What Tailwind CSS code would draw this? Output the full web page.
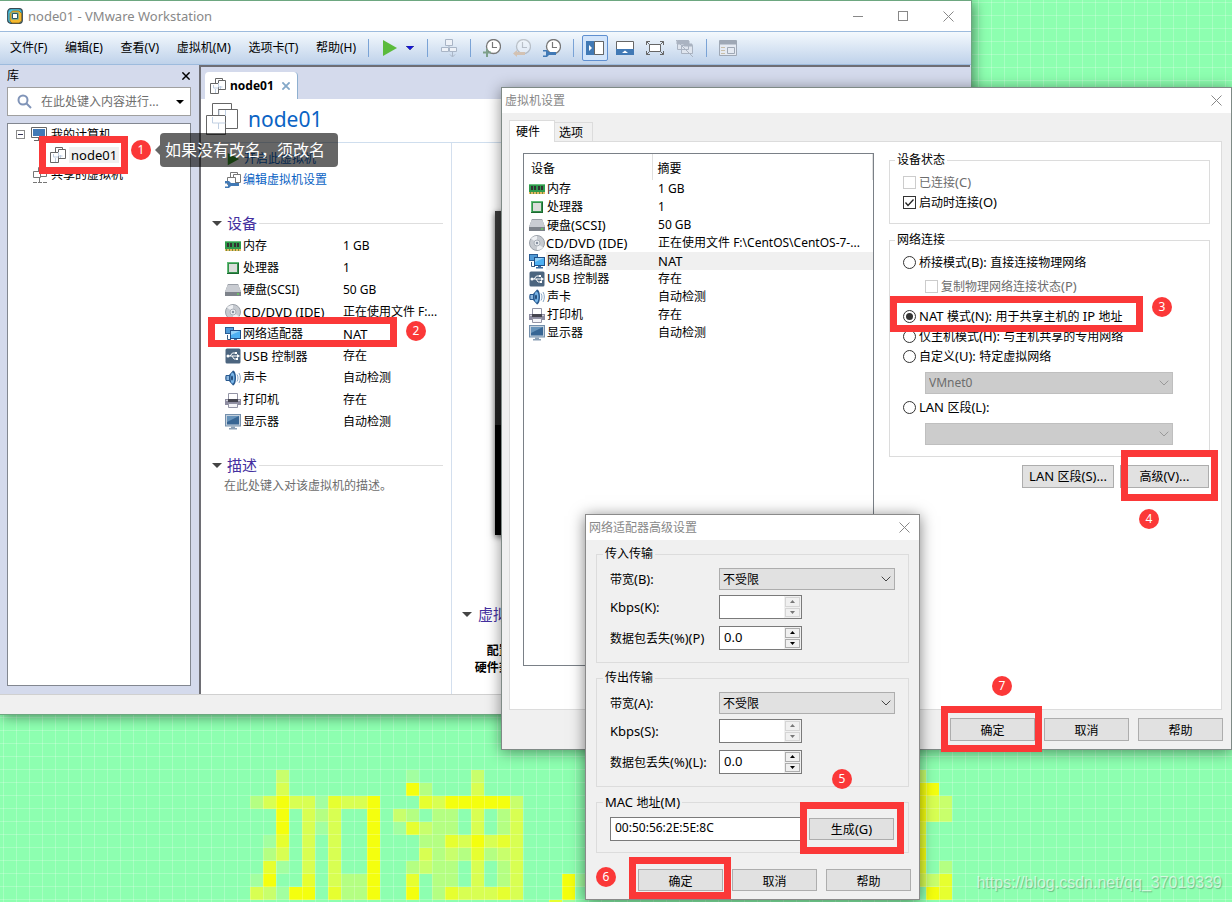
<!DOCTYPE html>
<html lang="zh-CN">
<head>
<meta charset="utf-8">
<meta name="viewport" content="width=device-width, initial-scale=1">
<title>node01 - VMware Workstation</title>
<script src="https://cdn.jsdelivr.net/npm/@tailwindcss/browser@4"></script>
</head>
<body class="font-['Noto_Sans','Noto_Sans_CJK_SC',sans-serif] text-[12px] leading-4 text-black">

<!-- Icon library -->
<svg class="hidden" aria-hidden="true">
  <symbol id="vm" viewBox="0 0 16 16"><g fill="#fff" stroke="#666"><path d="M5.500 .5h7v8h-7z"/><path d="M8.500 2.500h7v9h-7z"/><path d="M.5 5.500h8v10h-8z"/></g><path d="M3.500 7v3h5M5.500 15v-4M8.500 5v4h4M10.500 8v3" fill="none" stroke="#c0cfe2"/></symbol>
  <symbol id="vmbig" viewBox="0 0 32 32"><g fill="#fff" stroke="#666"><path d="M6.500 .5h19v19h-19z"/><path d="M12.500 6.500h19v19h-19z"/><path d="M.5 12.500h19v19h-19z"/></g><path d="M6.500 14v6h6v6M12.500 20h7M13 12v-5M19.500 7v6" fill="none" stroke="#c0cfe2"/></symbol>
  <symbol id="monitor-b" viewBox="0 0 16 15"><path d="M.5.5h15v10H.5z" fill="#fff" stroke="#666"/><path d="M2 2h12v7H2z" fill="#4179b5"/><path d="M7 11h2v2h4v1H3v-1h4z" fill="#666"/></symbol>
  <symbol id="shared" viewBox="0 0 15 16"><g fill="#fff" stroke="#777"><path d="M5.500 .5h6v7h-6z"/><path d="M7.500 2.500h6v7h-6z"/><path d="M.5 4.500h7v6h-7z"/></g><path d="M6.500 11v4M0 15.500h4M5 15.500h4M10 15.500h4" stroke="#777"/></symbol>
  <symbol id="edit" viewBox="0 0 16 16"><g fill="#fff" stroke="#777"><path d="M5.500 .5h7v6h-7z"/><path d="M8.500 2.500h7v8h-7z"/><path d="M2.500 5.500h8v7h-8z"/></g><path d="M0 9h4l2 2h8v3H6l-2 2H0v-1.500h3v-3H0z" fill="#4179b5"/></symbol>
  <symbol id="mem" viewBox="0 0 16 10"><path d="M0 0h16v8H0z" fill="#2f9a4c"/><path d="M0 0h16v1H0z" fill="#6cc27f"/><path d="M2 2h2v4H2zM5 2h2v4H5zM9 2h2v4H9zM12 2h2v4h-2z" fill="#333"/><path d="M0 8h16v2H0z" fill="#e3b862"/><path d="M1.500 8v2M4.500 8v2M7.500 8v2M10.500 8v2M13.500 8v2" stroke="#6b8f3c"/></symbol>
  <symbol id="cpu" viewBox="0 0 14 14"><path d="M1 1h12v12H1z" fill="#35924c"/><path d="M1 1h12v1H2v11H1z" fill="#62bd77"/><path d="M3 3h8v8H3z" fill="#dcdedb"/><path d="M12 2h1v11H1v-1h11z" fill="#1c6931"/></symbol>
  <symbol id="disk" viewBox="0 0 16 12"><path d="M3 0h10l3 8v4H0V8z" fill="#7d828a"/><path d="M3 0h10l3 8H0z" fill="#c9ccd2"/><path d="M3 0h10v1H3z" fill="#9ba0a8"/><circle cx="13" cy="10" r="1" fill="#69d05d"/></symbol>
  <symbol id="cd" viewBox="0 0 16 16"><circle cx="8" cy="8" r="7.500" fill="#c6cad0" stroke="#9aa0a8"/><path d="M8 8 2 3.500A7 7 0 0 1 8 1zM8 8l6 4.500A7 7 0 0 1 8 15z" fill="#eef0f3"/><circle cx="8" cy="8" r="3" fill="#e9ecf0" stroke="#aab0b8"/><circle cx="8" cy="8" r="1.200" fill="#8790a0"/></symbol>
  <symbol id="net" viewBox="0 0 16 15"><path d="M0 0h9v7H0z" fill="#2a5d94"/><path d="M1 1h7v5H1z" fill="#4f9ad6"/><path d="M2.500 8v4.500H6" stroke="#3a5d83" fill="none"/><path d="M5 3h11v9H5z" fill="#1f4f87"/><path d="M6 4h9v7H6z" fill="#4db0f2"/><path d="M6 4h9L6 8z" fill="#94d2f8"/><path d="M9 12h3v1h2v1.500H7V13h2z" fill="#3a6ca0"/></symbol>
  <symbol id="usb" viewBox="0 0 16 16"><rect width="15" height="15" x=".5" y=".5" rx="1.500" fill="#4c657f"/><path d="M2 8h11M5 8l2.500-3H10M7 8l2 3h2" stroke="#fff" fill="none"/><circle cx="3" cy="8" r="1.500" fill="#fff"/><path d="m12 6 3 2-3 2zM10 4h2v2h-2zM11 10h2v2h-2z" fill="#fff"/></symbol>
  <symbol id="snd" viewBox="0 0 16 16"><path d="M1 5h3l4-4.500c2 0 3 4 3 7.500s-1 7-3 7.500L4 11H1c-1-1-1-5 0-6z" fill="#28598f"/><path d="M1.500 6H4v4H1.500z" fill="#8cb7de"/><ellipse cx="7.500" cy="8" rx="2" ry="5.500" fill="#78b5e8"/><ellipse cx="7" cy="8" rx="1" ry="2.500" fill="#224a78"/><path d="M12 4.500c1.300 2 1.300 5 0 7M14 3c1.800 3 1.800 7 0 10" stroke="#8aa8c8" fill="none"/></symbol>
  <symbol id="prn" viewBox="0 0 16 15"><path d="M3.500.5h9v6h-9z" fill="#fff" stroke="#9394a5"/><path d="M0 6h16v6H0z" fill="#8d8ca0"/><path d="M1 7h14v1H1z" fill="#cfcfd8"/><path d="M3 6h10v3H3z" fill="#45454f"/><path d="M3.500 10.500h9v4h-9z" fill="#f4f4f8" stroke="#9394a5"/></symbol>
  <symbol id="disp" viewBox="0 0 16 16"><path d="M0 0h16v12.500H0z" fill="#7590ac"/><path d="M1 1h14v10.500H1z" fill="#c3d0dd"/><path d="M2 2h12v8.500H2z" fill="#386694"/><path d="M2 2h12L2 8z" fill="#6793ba"/><path d="M6 12.500h4V14h2v1.500H4V14h2z" fill="#8ba0b6"/></symbol>
  <symbol id="x" viewBox="0 0 11 11"><path d="m.5.5 10 10M10.500.5l-10 10" stroke="currentColor" fill="none"/></symbol>
  <symbol id="chev" viewBox="0 0 10 6"><path d="m.7.7 4.300 4.300L9.300.7" stroke="currentColor" fill="none"/></symbol>
  <symbol id="tri" viewBox="0 0 10 5"><path d="M0 0h10L5 5z" fill="currentColor"/></symbol>
  <symbol id="up" viewBox="0 0 5 3"><path d="M0 3h5L2.500 0z" fill="currentColor"/></symbol>
  <symbol id="down" viewBox="0 0 5 3"><path d="M0 0h5L2.500 3z" fill="currentColor"/></symbol>
  <symbol id="clock" viewBox="0 0 18 18"><circle cx="10.500" cy="7.500" r="7" fill="#fff" stroke="#777" stroke-width="1.300"/><path d="M9.500 3v5.500H14" stroke="#777" fill="none" stroke-width="1.200"/></symbol>
</svg>

<main class="relative h-screen overflow-hidden bg-[#8dffb0]">
  <!-- Wallpaper: tile grid with dot-matrix characters -->
  <svg id="wall" class="absolute inset-0 h-full w-full" aria-hidden="true">
    <g id="dots"></g>
    <defs><pattern id="grid" width="13" height="13" patternUnits="userSpaceOnUse" x="3" y="2"><path d="M0 .5h13M.5 0v13" stroke="#fff" stroke-opacity=".22"/></pattern></defs>
    <rect width="100%" height="100%" fill="url(#grid)"/>
  </svg>

  <!-- Workstation main window -->
  <section class="absolute left-0 top-0 flex h-[715px] w-[972px] flex-col border-t border-r border-b border-[#6da780] bg-[#d4daec] shadow-[2px_2px_12px_rgba(0,0,0,0.45)]" aria-label="VMware Workstation">
    <header class="flex h-[30px] shrink-0 items-center bg-white pl-[7px] pr-[17px] text-[#888]">
      <svg class="size-4" viewBox="0 0 16 16"><rect x=".7" y=".7" width="14.600" height="14.600" rx="3" fill="#35b1d1" stroke="#3a4850" stroke-width="1.200"/><path d="M1.500 4 4 1.500h8L14 4v1H5v9H3l-1.500-2z" fill="#4fc0dc"/><path d="M3 5.500 5.500 3H12l2.500 2.500V13L12 15H5l-2-2z" fill="#f5b92e" stroke="#9a6d14" stroke-width=".8"/><path d="M4.500 4.500h7v7h-7z" fill="#35a5cb"/><path d="M5.500 5.500h5v5h-5z" fill="#fff" stroke="#2b5666"/></svg>
      <h1 class="ml-[5px] text-[13px]">node01 - VMware Workstation</h1>
      <div class="ml-auto flex items-center gap-[35px]">
        <button aria-label="最小化" class="h-px w-[10px] bg-[#888]"></button>
        <button aria-label="最大化" class="size-[10px] border border-[#888]"></button>
        <button aria-label="关闭"><svg class="size-[11px]"><use href="#x"/></svg></button>
      </div>
    </header>
    <div class="flex h-[34px] shrink-0 items-center border-y border-[#9dbbdd] bg-linear-to-b from-[#f4f9fd] to-[#bfd2ea] pl-[10px]">
      <nav class="flex w-[346px] justify-between">
        <button>文件(F)</button><button>编辑(E)</button><button>查看(V)</button><button>虚拟机(M)</button><button>选项卡(T)</button><button>帮助(H)</button>
      </nav>
      <i class="ml-3 h-[18px] w-px bg-[#7aa3d6]"></i>
      <button aria-label="开机" class="ml-[14px]"><svg class="h-4 w-[14px]" viewBox="0 0 14 16"><path d="m0 0 14 8-14 8z" fill="#5bbb3c"/></svg></button>
      <button aria-label="电源选项" class="ml-[9px] text-[#1414e6]"><svg class="h-1 w-2" viewBox="0 0 10 5" preserveAspectRatio="none"><path d="M0 0h10L5 5z" fill="currentColor" stroke="#223" stroke-width=".5"/></svg></button>
      <i class="ml-[13px] h-[18px] w-px bg-[#7aa3d6]"></i>
      <button aria-label="发送按键" class="ml-[13px]"><svg class="h-[18px] w-4" viewBox="0 0 16 18" fill="#eef2f8" stroke="#a9b5c6"><path d="M4.500.5h7v6h-7zM.5 8.500h7v4h-7zM8.500 8.500h7v4h-7z"/><path d="M8 6.500v2M11.500 12.500v5m-2.500-2 2.500 2.500 2.500-2.500" fill="none"/></svg></button>
      <i class="ml-[13px] h-[18px] w-px bg-[#7aa3d6]"></i>
      <button aria-label="拍摄快照" class="ml-3"><svg class="size-[18px]" viewBox="0 0 18 18"><use href="#clock"/><path d="M0 13.500h8M4 10v8" stroke="#7da08a" stroke-width="2"/></svg></button>
      <button aria-label="恢复快照" class="ml-3" disabled><svg class="size-[18px]" viewBox="0 0 18 18"><g opacity=".35"><use href="#clock"/></g><path d="m0 14.500 4-3.500v2h8v3H4v2z" fill="#d3c2b3"/></svg></button>
      <button aria-label="管理快照" class="ml-3"><svg class="size-[18px]" viewBox="0 0 18 18"><use href="#clock"/><path d="M0 11h4l2 2h7v3H6l-2 2H0v-1.500h3v-4H0z" fill="#4179b5"/></svg></button>
      <i class="ml-3 h-[18px] w-px bg-[#7aa3d6]"></i>
      <button aria-label="显示库" class="ml-2 grid size-[26px] place-items-center rounded-xs border border-[#5f8fd0] bg-[#d3e5fb]"><svg class="h-[14px] w-[18px]" viewBox="0 0 18 14"><path d="M0 0h18v14H0z" fill="#4179b5"/><path d="M8.500.5h9v13h-9z" fill="#fff" stroke="#666"/><path d="m3 4 3 3-3 3z" fill="#fff"/></svg></button>
      <button aria-label="缩略图栏" class="ml-2"><svg class="h-[14px] w-[18px]" viewBox="0 0 18 14"><path d="M.5.5h17v9H.5z" fill="#fff" stroke="#666"/><path d="M0 8h18v6H0z" fill="#4179b5"/><path d="m6 12 3-2.500 3 2.500z" fill="#fff"/></svg></button>
      <button aria-label="全屏" class="ml-3"><svg class="h-[14px] w-[18px]" viewBox="0 0 18 14" fill="none" stroke="#666"><path d="M3.500 3.500h11v7h-11z" fill="#fff"/><path d="M.5 4V.5H4M14 .5h3.500V4M17.500 10v3.500H14M4 13.500H.5V10M.5.5l3 3M17.500.5l-3 3M17.500 13.500l-3-3M.5 13.500l3-3"/></svg></button>
      <button aria-label="Unity" class="ml-3" disabled><svg class="h-[17px] w-[18px]" viewBox="0 0 18 17" fill="#dfe5ee" stroke="#aab3c1"><path d="M1.500.5h11v9h-11zM5.500 5.500h11v8h-11z"/><path d="M1 1h12v3H1zM8 4h8v2H8z" fill="#aab3c1"/><path d="m0 0 17 17"/></svg></button>
      <i class="ml-3 h-[18px] w-px bg-[#7aa3d6]"></i>
      <button aria-label="控制台视图" class="ml-3" disabled><svg class="h-4 w-[18px]" viewBox="0 0 18 16" fill="#e5eaf2" stroke="#9fa8b5"><path d="M.5.5h17v15H.5z"/><path d="M1 1h16v3H1z" fill="#9fa8b5"/><path d="M8.500 7.500h7v6h-7z"/><path d="M2 7.500h4M2 10.500h4M2 13.500h4" stroke="#c9bfa9"/></svg></button>
    </div>

    <div class="flex min-h-0 flex-1">
      <!-- Library -->
      <aside class="flex w-[199px] shrink-0 flex-col px-[7px] pb-2">
        <div class="flex h-[22px] items-center justify-between pr-[2px]">
          <h2>库</h2>
          <button aria-label="关闭库"><svg class="size-[8px]" viewBox="0 0 11 11"><path d="m.5.5 10 10M10.500.5l-10 10" stroke="#000" stroke-width="2"/></svg></button>
        </div>
        <div class="mr-px flex h-[29px] items-center border border-[#a0a0a0] bg-white pl-[9px] pr-[6px]">
          <svg class="size-[15px] shrink-0" viewBox="0 0 15 15" fill="none" stroke="#8094b8" stroke-width="2"><circle cx="6" cy="6" r="4.500"/><path d="m9.500 9.500 4.500 4.500"/></svg>
          <input aria-label="搜索库" placeholder="在此处键入内容进行..." class="ml-[9px] min-w-0 flex-1 outline-none placeholder:text-[#6d6d6d]">
          <svg class="h-1 w-2"><use href="#tri"/></svg>
        </div>
        <ul class="mr-px mt-[7px] flex-1 border border-[#828790] bg-white text-[12px]">
          <li class="flex h-[21px] items-center pl-2">
            <button aria-label="折叠" class="grid size-[9px] place-items-center border border-[#8a8a8a]"><span class="h-px w-[5px] bg-[#335]"></span></button>
            <svg class="ml-[6px] h-[15px] w-4"><use href="#monitor-b"/></svg><span class="ml-1">我的计算机</span>
          </li>
          <li class="flex h-5 items-center pl-[42px] text-[13px]"><svg class="size-4"><use href="#vm"/></svg><span class="ml-[3px] bg-[#f0f0f0] px-[2px]">node01</span></li>
          <li class="flex h-[19px] items-center pl-[25px]"><svg class="h-4 w-[15px]"><use href="#shared"/></svg><span class="ml-[3px]">共享的虚拟机</span></li>
        </ul>
      </aside>

      <!-- Tab area -->
      <div class="mr-px flex min-w-0 flex-1 flex-col border-l-2 border-t-2 border-[#6e6e74]">
        <div class="flex h-8 items-end pl-1">
          <div role="tab" class="flex h-[27px] w-[93px] items-center rounded-t-sm border-r border-[#8fb0d0] bg-white pl-[5px] pr-[7px]">
            <svg class="size-4"><use href="#vm"/></svg><b class="ml-1">node01</b>
            <button aria-label="关闭标签" class="ml-auto text-[#84a8c8]"><svg class="size-2" viewBox="0 0 11 11"><path d="m.5.5 10 10M10.500.5l-10 10" stroke="currentColor" stroke-width="2.500"/></svg></button>
          </div>
        </div>
        <div class="flex min-h-0 flex-1 flex-col bg-white">
          <div class="flex h-11 shrink-0 items-center border-b border-[#cfdeee] pb-[3px] pl-[5px]">
            <svg class="size-8"><use href="#vmbig"/></svg>
            <h2 class="ml-[10px] text-[21px] leading-7 text-[#0a63c4]">node01</h2>
          </div>
          <div class="flex min-h-0 flex-1">
            <div class="w-[251px] shrink-0 border-r border-[#d3dfee] pl-[11px] pr-2 pt-2">
              <div class="flex flex-col gap-[5px] pl-[13px] text-[#0a63c4]">
                <a href="#" class="flex items-center gap-[3px]"><svg class="h-[14px] w-4" viewBox="0 0 16 16"><path d="m2 1 13 7-13 7z" fill="#3b9a2a"/></svg>开启此虚拟机</a>
                <a href="#" class="flex items-center gap-[2px]"><svg class="size-4"><use href="#edit"/></svg>编辑虚拟机设置</a>
              </div>
              <h3 class="mt-[25px] flex items-center text-[15px] leading-5 text-[#4430a0]"><svg class="mr-[5px] h-[5px] w-[10px] text-[#444]"><use href="#tri"/></svg>设备<span class="ml-[2px] h-px flex-1 bg-[#dedede]"></span></h3>
              <table class="mt-[2px] w-full table-fixed">
                <colgroup><col class="w-[31px]"><col class="w-[100px]"><col></colgroup>
                <tbody>
                  <tr class="h-[22px]"><td class="pl-[13px]"><svg class="h-[10px] w-4"><use href="#mem"/></svg></td><td>内存</td><td>1 GB</td></tr>
                  <tr class="h-[22px]"><td class="pl-[14px]"><svg class="size-[14px]"><use href="#cpu"/></svg></td><td>处理器</td><td>1</td></tr>
                  <tr class="h-[22px]"><td class="pl-[13px]"><svg class="h-3 w-4"><use href="#disk"/></svg></td><td>硬盘(SCSI)</td><td>50 GB</td></tr>
                  <tr class="h-[22px]"><td class="pl-[13px]"><svg class="size-4"><use href="#cd"/></svg></td><td class="whitespace-nowrap text-[13px]">CD/DVD (IDE)</td><td class="whitespace-nowrap">正在使用文件 F:...</td></tr>
                  <tr class="h-[22px]"><td class="pl-[13px]"><svg class="h-[15px] w-4"><use href="#net"/></svg></td><td>网络适配器</td><td class="text-[13px]">NAT</td></tr>
                  <tr class="h-[22px]"><td class="pl-[13px]"><svg class="size-4"><use href="#usb"/></svg></td><td><span class="text-[13px]">USB </span>控制器</td><td>存在</td></tr>
                  <tr class="h-[22px]"><td class="pl-[13px]"><svg class="size-4"><use href="#snd"/></svg></td><td>声卡</td><td>自动检测</td></tr>
                  <tr class="h-[22px]"><td class="pl-[13px]"><svg class="h-[15px] w-4"><use href="#prn"/></svg></td><td>打印机</td><td>存在</td></tr>
                  <tr class="h-[22px]"><td class="pl-[13px]"><svg class="size-4"><use href="#disp"/></svg></td><td>显示器</td><td>自动检测</td></tr>
                </tbody>
              </table>
              <h3 class="mt-[22px] flex items-center text-[15px] leading-5 text-[#4430a0]"><svg class="mr-[5px] h-[5px] w-[10px] text-[#444]"><use href="#tri"/></svg>描述<span class="ml-[2px] h-px flex-1 bg-[#dedede]"></span></h3>
              <p class="mt-[3px] pl-3 text-[#6d6d6d]">在此处键入对该虚拟机的描述。</p>
            </div>
            <div class="min-w-0 flex-1 pl-[10px] pt-[68px]">
              <div class="ml-[33px] mr-8 h-[324px] bg-linear-to-b from-[#3c3c3c] from-0% via-[#222] via-66% to-black to-66% shadow-[0_2px_6px_rgba(0,0,0,0.6)]"></div>
              <h3 class="mt-[69px] flex items-center text-[15px] leading-5 text-[#4430a0]"><svg class="mr-[6px] h-[5px] w-[10px] text-[#444]"><use href="#tri"/></svg>虚拟机详细信息</h3>
              <dl class="mt-[18px] w-[76px] text-right font-bold leading-[17px]"><dt>配置文件:</dt><dt>硬件兼容性:</dt></dl>
            </div>
          </div>
        </div>
      </div>
    </div>
    <footer class="h-5 shrink-0 border-t border-[#d0d0d0] bg-[#f0f0f0]"></footer>
  </section>

  <!-- Virtual machine settings -->
  <section role="dialog" aria-label="虚拟机设置" class="absolute left-[501px] top-[87px] flex h-[663px] w-[731px] flex-col border border-[#7f8a86] bg-[#f0f0f0] shadow-[0_2px_14px_rgba(0,0,0,0.45)]">
    <header class="flex h-[25px] shrink-0 items-center justify-between bg-white pl-[3px] pr-[9px] text-[#888]"><h2>虚拟机设置</h2><button aria-label="关闭"><svg class="size-[11px]"><use href="#x"/></svg></button></header>
    <div class="flex min-h-0 flex-1 flex-col px-[7px] pt-[7px]">
      <div role="tablist" class="flex h-[21px] items-end">
        <button role="tab" class="relative -mb-px h-[22px] w-[46px] border border-b-0 border-[#dcdcdc] bg-white pr-2">硬件</button>
        <button role="tab" class="h-[19px] w-[38px] border border-b-0 border-l-0 border-[#dcdcdc] pr-[5px] pt-px">选项</button>
      </div>
      <div role="tabpanel" class="mr-[2px] flex h-[569px] border border-[#dcdcdc] bg-white pl-[13px] pr-[11px] pt-[11px]">
        <div class="h-[513px] w-[351px] shrink-0 border border-[#7a8087]">
          <table class="w-full table-fixed">
            <colgroup><col class="w-[22px]"><col class="w-[106px]"><col></colgroup>
            <thead><tr class="h-[26px] text-left"><th colspan="2" class="pl-[7px] pt-[3px] font-normal">设备</th><th class="border-x border-[#e0e0e0] pl-[5px] pt-[3px] font-normal">摘要</th></tr></thead>
            <tbody>
              <tr class="h-[18px]"><td class="pl-[5px]"><svg class="h-[10px] w-4"><use href="#mem"/></svg></td><td class="pl-px">内存</td><td class="pl-[6px]">1 GB</td></tr>
              <tr class="h-[18px]"><td class="pl-[6px]"><svg class="size-[14px]"><use href="#cpu"/></svg></td><td class="pl-px">处理器</td><td class="pl-[6px]">1</td></tr>
              <tr class="h-[18px]"><td class="pl-[5px]"><svg class="h-3 w-4"><use href="#disk"/></svg></td><td class="pl-px">硬盘<span class="text-[13px]">(SCSI)</span></td><td class="pl-[6px]">50 GB</td></tr>
              <tr class="h-[18px]"><td class="pl-[5px]"><svg class="size-4"><use href="#cd"/></svg></td><td class="text-[13px]">CD/DVD (IDE)</td><td class="whitespace-nowrap pl-[6px]">正在使用文件 F:\CentOS\CentOS-7-...</td></tr>
              <tr class="h-[18px]"><td class="pl-[5px]"><svg class="h-[15px] w-4"><use href="#net"/></svg></td><td class="bg-[#f0f0f0] pl-px">网络适配器</td><td class="bg-[#f0f0f0] pl-[6px] text-[13px]">NAT</td></tr>
              <tr class="h-[18px]"><td class="pl-[5px]"><svg class="size-4"><use href="#usb"/></svg></td><td class="pl-px">USB 控制器</td><td class="pl-[6px]">存在</td></tr>
              <tr class="h-[18px]"><td class="pl-[5px]"><svg class="size-4"><use href="#snd"/></svg></td><td class="pl-px">声卡</td><td class="pl-[6px]">自动检测</td></tr>
              <tr class="h-[18px]"><td class="pl-[5px]"><svg class="h-[15px] w-4"><use href="#prn"/></svg></td><td class="pl-px">打印机</td><td class="pl-[6px]">存在</td></tr>
              <tr class="h-[18px]"><td class="pl-[5px]"><svg class="size-4"><use href="#disp"/></svg></td><td class="pl-px">显示器</td><td class="pl-[6px]">自动检测</td></tr>
            </tbody>
          </table>
        </div>
        <div class="ml-[15px] min-w-0 flex-1">
          <fieldset class="h-[71px] border border-[#dcdcdc] pl-[13px]">
            <legend class="-ml-2 px-[2px] leading-[14px]">设备状态</legend>
            <label class="mt-[5px] flex h-5 items-center gap-[3px] text-[#6d6d6d]"><input type="checkbox" disabled class="size-[13px] appearance-none border border-[#ccc]"><span>已连接<span class="text-[13px]">(C)</span></span></label>
            <label class="flex h-5 items-center gap-[3px]"><span class="relative flex"><input type="checkbox" checked class="size-[13px] appearance-none border border-[#333]"><svg class="pointer-events-none absolute inset-0 size-[13px]" viewBox="0 0 13 13"><path d="m2.500 6.500 2.500 3 5.500-6" fill="none" stroke="#222" stroke-width="1.300"/></svg></span><span>启动时连接<span class="text-[13px]">(O)</span></span></label>
          </fieldset>
          <fieldset class="mt-[9px] h-[224px] border border-[#dcdcdc] pl-[13px]">
            <legend class="-ml-2 px-[2px] leading-[14px]">网络连接</legend>
            <label class="mt-[5px] flex h-5 items-center gap-[3px]"><input type="radio" name="n" class="size-[13px] appearance-none rounded-full border border-[#333]"><span>桥接模式<span class="text-[13px]">(B): </span>直接连接物理网络</span></label>
            <label class="ml-[22px] mt-1 flex h-5 items-center gap-[3px] text-[#6d6d6d]"><input type="checkbox" disabled class="size-[13px] appearance-none border border-[#ccc]"><span>复制物理网络连接状态<span class="text-[13px]">(P)</span></span></label>
            <label class="mt-[10px] flex h-5 items-center gap-[3px]"><input type="radio" name="n" checked class="size-[13px] appearance-none rounded-full border border-[#333] bg-[#333] bg-clip-content p-[2px]"><span><span class="text-[13px]">NAT </span>模式<span class="text-[13px]">(N): </span>用于共享主机的<span class="text-[13px]"> IP </span>地址</span></label>
            <label class="flex h-5 items-center gap-[3px]"><input type="radio" name="n" class="size-[13px] appearance-none rounded-full border border-[#333]"><span>仅主机模式<span class="text-[13px]">(H): </span>与主机共享的专用网络</span></label>
            <label class="flex h-5 items-center gap-[3px]"><input type="radio" name="n" class="size-[13px] appearance-none rounded-full border border-[#333]"><span>自定义<span class="text-[13px]">(U): </span>特定虚拟网络</span></label>
            <div class="relative ml-[22px] mr-9 mt-[6px]"><select aria-label="特定虚拟网络" disabled class="block h-[22px] w-full appearance-none border border-[#bfbfbf] bg-[#ccc] pl-[3px] text-[12px] text-[#6d6d6d] opacity-100"><option>VMnet0</option></select><svg class="pointer-events-none absolute right-1 top-2 h-[6px] w-[10px] text-[#999]"><use href="#chev"/></svg></div>
            <label class="mt-[3px] flex h-5 items-center gap-[3px]"><input type="radio" name="n" class="size-[13px] appearance-none rounded-full border border-[#333]"><span><span class="text-[13px]">LAN </span>区段<span class="text-[13px]">(L):</span></span></label>
            <div class="relative ml-[22px] mr-9 mt-[6px]"><select aria-label="LAN 区段" disabled class="block h-[22px] w-full appearance-none border border-[#bfbfbf] bg-[#ccc] opacity-100"></select><svg class="pointer-events-none absolute right-1 top-2 h-[6px] w-[10px] text-[#999]"><use href="#chev"/></svg></div>
          </fieldset>
          <div class="mr-px mt-2 flex justify-end gap-[6px]">
            <button class="h-[23px] w-[92px] border border-[#adadad] bg-[#e1e1e1]"><span class="text-[13px]">LAN </span>区段<span class="text-[13px]">(S)...</span></button>
            <button class="h-[23px] w-[89px] border border-[#adadad] bg-[#e1e1e1]">高级<span class="text-[13px]">(V)...</span></button>
          </div>
        </div>
      </div>
      <div class="mr-px mt-2 flex justify-end gap-[9px]">
        <button class="h-[23px] w-[85px] border border-[#adadad] bg-[#e1e1e1] pt-[3px]">确定</button><button class="h-[23px] w-[85px] border border-[#adadad] bg-[#e1e1e1] pt-[3px]">取消</button><button class="h-[23px] w-[85px] border border-[#adadad] bg-[#e1e1e1] pt-[3px]">帮助</button>
      </div>
    </div>
  </section>

  <!-- Network adapter advanced settings -->
  <section role="dialog" aria-label="网络适配器高级设置" class="absolute left-[585px] top-[514px] flex h-[386px] w-[335px] flex-col border border-[#8a8a8a] bg-[#f0f0f0] shadow-[0_2px_14px_rgba(0,0,0,0.5)]">
    <header class="flex h-[25px] shrink-0 items-center justify-between bg-white pl-[3px] pr-[9px] text-[#888]"><h2>网络适配器高级设置</h2><button aria-label="关闭"><svg class="size-[11px]"><use href="#x"/></svg></button></header>
    <div class="flex-1 px-[10px] pt-[7px]">
      <fieldset class="h-[116px] border border-[#dcdcdc] px-[13px]">
        <legend class="-ml-[7px] px-[2px] leading-[14px]">传入传输</legend>
        <div class="mt-[7px] flex h-[22px] items-center"><label for="bi" class="w-[109px]">带宽<span class="text-[13px]">(B):</span></label><div class="relative flex-1"><select id="bi" class="block h-[22px] w-full appearance-none border border-[#adadad] bg-[#e1e1e1] pl-[3px] pt-[2px]"><option>不受限</option></select><svg class="pointer-events-none absolute right-1 top-2 h-[6px] w-[10px] text-[#444]"><use href="#chev"/></svg></div></div>
        <div class="mt-[5px] flex h-6 items-center"><label for="ki" class="w-[109px] text-[13px]">Kbps(K):</label><div class="flex h-6 w-[83px] border border-[#7a7a7a] bg-[#f0f0f0]"><input id="ki" disabled class="min-w-0 flex-1 bg-white px-1"><span class="grid w-[17px] gap-px p-px text-[#777]"><button aria-label="增加" disabled class="grid place-items-center border border-[#d5d5d5]"><svg class="h-[3px] w-[5px]"><use href="#up"/></svg></button><button aria-label="减少" disabled class="grid place-items-center border border-[#d5d5d5]"><svg class="h-[3px] w-[5px]"><use href="#down"/></svg></button></span></div></div>
        <div class="mt-[7px] flex h-6 items-center"><label for="pi" class="w-[109px] whitespace-nowrap">数据包丢失<span class="text-[13px]">(%)(P)</span></label><div class="flex h-6 w-[83px] border border-[#7a7a7a] bg-[#f0f0f0]"><input id="pi" value="0.0" class="min-w-0 flex-1 bg-white px-1 pb-[2px] text-[13px]"><span class="grid w-[17px] gap-px p-px"><button aria-label="增加" class="grid place-items-center border border-[#adadad]"><svg class="h-[3px] w-[5px]"><use href="#up"/></svg></button><button aria-label="减少" class="grid place-items-center border border-[#adadad]"><svg class="h-[3px] w-[5px]"><use href="#down"/></svg></button></span></div></div>
      </fieldset>
      <fieldset class="mt-2 h-[116px] border border-[#dcdcdc] px-[13px]">
        <legend class="-ml-[7px] px-[2px] leading-[14px]">传出传输</legend>
        <div class="mt-[7px] flex h-[22px] items-center"><label for="bo" class="w-[109px]">带宽<span class="text-[13px]">(A):</span></label><div class="relative flex-1"><select id="bo" class="block h-[22px] w-full appearance-none border border-[#adadad] bg-[#e1e1e1] pl-[3px] pt-[2px]"><option>不受限</option></select><svg class="pointer-events-none absolute right-1 top-2 h-[6px] w-[10px] text-[#444]"><use href="#chev"/></svg></div></div>
        <div class="mt-[5px] flex h-6 items-center"><label for="ko" class="w-[109px] text-[13px]">Kbps(S):</label><div class="flex h-6 w-[83px] border border-[#7a7a7a] bg-[#f0f0f0]"><input id="ko" disabled class="min-w-0 flex-1 bg-white px-1"><span class="grid w-[17px] gap-px p-px text-[#777]"><button aria-label="增加" disabled class="grid place-items-center border border-[#d5d5d5]"><svg class="h-[3px] w-[5px]"><use href="#up"/></svg></button><button aria-label="减少" disabled class="grid place-items-center border border-[#d5d5d5]"><svg class="h-[3px] w-[5px]"><use href="#down"/></svg></button></span></div></div>
        <div class="mt-[7px] flex h-6 items-center"><label for="po" class="w-[109px] whitespace-nowrap">数据包丢失<span class="text-[13px]">(%)(L):</span></label><div class="flex h-6 w-[83px] border border-[#7a7a7a] bg-[#f0f0f0]"><input id="po" value="0.0" class="min-w-0 flex-1 bg-white px-1 pb-[2px] text-[13px]"><span class="grid w-[17px] gap-px p-px"><button aria-label="增加" class="grid place-items-center border border-[#adadad]"><svg class="h-[3px] w-[5px]"><use href="#up"/></svg></button><button aria-label="减少" class="grid place-items-center border border-[#adadad]"><svg class="h-[3px] w-[5px]"><use href="#down"/></svg></button></span></div></div>
      </fieldset>
      <fieldset class="mt-2 h-[58px] border border-[#dcdcdc] pl-[13px] pr-[14px]">
        <legend class="-ml-[7px] px-[2px] leading-[14px]"><label for="mac"><span class="text-[13px]">MAC </span>地址<span class="text-[13px]">(M)</span></label></legend>
        <div class="mt-[7px] flex items-center gap-[7px]"><input id="mac" value="00:50:56:2E:5E:8C" class="h-6 min-w-0 flex-1 border border-[#7a7a7a] bg-white px-1 pb-[3px] text-[12px]"><button class="h-[22px] w-[85px] border border-[#adadad] bg-[#e1e1e1]">生成<span class="text-[13px]">(G)</span></button></div>
      </fieldset>
      <div class="-mr-[2px] mt-4 flex justify-end gap-[9px]">
        <button class="h-[22px] w-[85px] border border-[#adadad] bg-[#e1e1e1] pt-[3px]">确定</button><button class="h-[22px] w-[85px] border border-[#adadad] bg-[#e1e1e1] pt-[3px]">取消</button><button class="h-[22px] w-[85px] border border-[#adadad] bg-[#e1e1e1] pt-[3px]">帮助</button>
      </div>
    </div>
  </section>

  <!-- Step annotations -->
  <div class="pointer-events-none text-[12px] text-white">
    <div class="absolute left-[39px] top-[136px] h-[38px] w-[89px] border-7 border-[#fb3838]"></div>
    <div class="absolute left-[208px] top-[317px] h-[30px] w-[189px] border-7 border-[#fb3838]"></div>
    <div class="absolute left-[890px] top-[296px] h-[36px] w-[253px] border-7 border-[#fb3838]"></div>
    <div class="absolute left-[1121px] top-[450px] h-[51px] w-[97px] border-7 border-[#fb3838]"></div>
    <div class="absolute left-[800px] top-[802px] h-[52px] w-[104px] border-7 border-[#fb3838]"></div>
    <div class="absolute left-[629px] top-[857px] h-[42px] w-[102px] border-7 border-[#fb3838]"></div>
    <div class="absolute left-[941px] top-[706px] h-[46px] w-[101px] border-7 border-[#fb3838]"></div>
    <span class="absolute left-[131px] top-[140px] grid size-5 place-items-center rounded-full bg-[#fb3838]">1</span>
    <span class="absolute left-[406px] top-[321px] grid size-5 place-items-center rounded-full bg-[#fb3838]">2</span>
    <span class="absolute left-[1152px] top-[297px] grid size-5 place-items-center rounded-full bg-[#fb3838]">3</span>
    <span class="absolute left-[1139px] top-[509px] grid size-5 place-items-center rounded-full bg-[#fb3838]">4</span>
    <span class="absolute left-[832px] top-[769px] grid size-5 place-items-center rounded-full bg-[#fb3838]">5</span>
    <span class="absolute left-[596px] top-[867px] grid size-5 place-items-center rounded-full bg-[#fb3838]">6</span>
    <span class="absolute left-[992px] top-[676px] grid size-5 place-items-center rounded-full bg-[#fb3838]">7</span>
    <div class="absolute left-[155px] top-[133px] flex items-center">
      <svg class="h-[10px] w-[5px]" viewBox="0 0 5 10"><path d="M5 0v10L0 5z" fill="#000" fill-opacity=".6"/></svg>
      <span class="h-[34px] w-[178px] whitespace-nowrap rounded-sm bg-black/60 pl-[5px] text-[16px] leading-[34px]">如果没有改名，须改名</span>
    </div>
  </div>
  <p class="absolute bottom-[9px] right-[10px] font-['Liberation_Sans',sans-serif] text-[16px] leading-5 text-white/60 [text-shadow:1px_1px_1px_rgba(0,0,0,0.25)]">https://blog.csdn.net/qq_37019339</p>
</main>

<script>
  // Dot-matrix rows; each letter is one tile's brightness. Keys are the first column.
  const rows = [
    {2:'c',12:'a',17:'c',51:'c'},
    {2:'d',12:'fb',17:'d',51:'ff'},
    {0:'bdfddaeddf',13:'edfffffc',51:'fdc'},
    {2:'f',4:'dbd',9:'f',11:'cb',14:'bb',17:'d',19:'bd',51:'fdc'},
    {2:'f',4:'dad',9:'f',11:'aecbb',17:'d',19:'bd',51:'e'},
    {1:'ae',4:'d',6:'d',9:'f',13:'bbedfded',51:'e'},
    {1:'bd',4:'d',6:'d',9:'f',13:'dbcbebcd',51:'f'},
    {1:'ea',4:'d',6:'d',9:'f',12:'bcbb',17:'d',19:'bd',51:'e',53:'b'},
    {0:'af',4:'e',6:'dbbf',12:'e',14:'bb',17:'d',19:'bd',24:'fa',51:'dce'},
    {0:'dcaff',6:'ebbf',12:'f',14:'bedddde'.replace('dde','ded'),24:'f',52:'fe'},
    {23:'ea'}
  ];
  const tone = {a:'#a2ffa0',b:'#b4ff82',c:'#c8ff6c',d:'#d8ff52',e:'#e6ff30',f:'#f4ff0e'};
  const g = document.getElementById('dots');
  rows.forEach((row, y) => Object.entries(row).forEach(([x0, run]) => [...run].forEach((t, i) => {
    const r = document.createElementNS('http://www.w3.org/2000/svg', 'rect');
    r.setAttribute('x', 250 + 13 * (+x0 + i)); r.setAttribute('y', 770 + 13 * y);
    r.setAttribute('width', 13); r.setAttribute('height', 13); r.setAttribute('fill', tone[t]);
    g.appendChild(r);
  })));
</script>
</body>
</html>
